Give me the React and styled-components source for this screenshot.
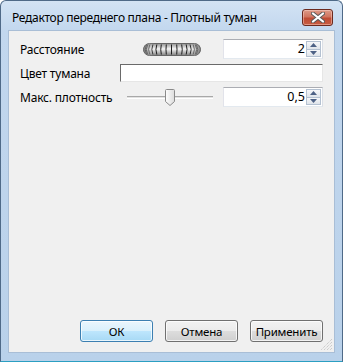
import React from "react";
import styled, { createGlobalStyle } from "styled-components";

const Global = createGlobalStyle`
  html, body { margin: 0; padding: 0; background: #ffffff; }
  body { font-family: "Noto Sans", "Open Sans", sans-serif; font-size: 12px; color: #000; }
  * { box-sizing: border-box; }
`;

const Window = styled.div`
  width: 343px;
  height: 362px;
  display: flex;
  flex-direction: column;
  border: 1px solid #4f6a88;
  border-bottom-color: #2b9fc2;
  border-radius: 6px 6px 0 0;
  background: linear-gradient(#d3e3f4 0px, #c2d7ee 30px, #b9d1ea 100%);
  overflow: hidden;
`;

const TitleBar = styled.div`
  height: 29px;
  flex: none;
  display: flex;
  align-items: center;
  padding: 4px 9px 0 11px;
`;

const Title = styled.div`
  flex: 1;
  font-size: 12px;
  color: #000;
  white-space: nowrap;
  letter-spacing: -0.3px;
`;

const CloseButton = styled.div`
  width: 31px;
  height: 17px;
  border: 1px solid #6b2a1f;
  border-radius: 3px;
  background: linear-gradient(#dd9a88 0%, #d07560 45%, #bf4c35 55%, #c75d42 100%);
  box-shadow: inset 0 0 0 1px rgba(255, 220, 210, 0.45);
  display: flex;
  align-items: center;
  justify-content: center;
`;

const Frame = styled.div`
  flex: 1;
  display: flex;
  padding: 0 7px 8px 7px;
`;

const Client = styled.div`
  flex: 1;
  position: relative;
  display: flex;
  flex-direction: column;
  background: #f0f0f0;
  border: 1px solid #a9bed6;
  padding: 8px 11px 10px 11px;
`;

const Form = styled.div`
  display: grid;
  grid-template-columns: 100px 103px 100px;
  row-gap: 5px;
  align-items: center;
`;

const Label = styled.div`
  font-size: 12px;
  letter-spacing: -0.2px;
  white-space: nowrap;
`;

const Middle = styled.div`
  display: flex;
  align-items: center;
  justify-content: ${(p) => p.$justify || "center"};
  grid-column: ${(p) => p.$span || "auto"};
`;

const SpinBox = styled.div`
  height: 20px;
  display: flex;
  align-items: stretch;
  background: #fff;
  border: 1px solid #abadb3;
  border-left-color: #e2e3ea;
  border-right-color: #dbdfe6;
  border-bottom-color: #e3e9ef;
  padding: 1px;
`;

const SpinValue = styled.div`
  flex: 1;
  text-align: right;
  font-size: 12.5px;
  line-height: 16px;
  padding-right: 1px;
`;

const SpinButtons = styled.div`
  width: 15px;
  display: flex;
  flex-direction: column;
`;

const SpinHalf = styled.div`
  flex: 1;
  display: flex;
  align-items: center;
  justify-content: center;
  border: 1px solid #b4c1d1;
  border-top-width: ${(p) => (p.$down ? "0" : "1px")};
  background: linear-gradient(#f6f7f9, #dfe4ea);
`;

const ColorField = styled.div`
  height: 18px;
  width: 203px;
  background: #fff;
  border-top: 1px solid #6a6a6a;
  border-left: 1px solid #6a6a6a;
  border-right: 1px solid #e6e6e6;
  border-bottom: 1px solid #e6e6e6;
`;

const Slider = styled.div`
  position: relative;
  width: 86px;
  height: 18px;
  margin-left: 7px;
  display: flex;
  align-items: center;
`;

const Track = styled.div`
  width: 100%;
  height: 3px;
  border-top: 1px solid #a8a8a8;
  border-bottom: 1px solid #ffffff;
  background: #e2e2e2;
`;

const Thumb = styled.svg`
  position: absolute;
  left: 38px;
  top: 1px;
`;

const Spacer = styled.div`
  flex: 1;
`;

const ButtonRow = styled.div`
  display: flex;
  justify-content: flex-end;
  gap: 12px;
`;

const Button = styled.div`
  width: 73px;
  height: 22px;
  border: 1px solid ${(p) => (p.$default ? "#3c7fb1" : "#707070")};
  border-radius: 3px;
  background: ${(p) =>
    p.$default
      ? "linear-gradient(#eaf6fd 0%, #d9f0fc 50%, #bee6fd 50%, #a7d9f5 100%)"
      : "linear-gradient(#f2f2f2 0%, #ebebeb 50%, #dddddd 50%, #cfcfcf 100%)"};
  box-shadow: inset 0 0 0 1px rgba(255, 255, 255, 0.75);
  display: flex;
  align-items: center;
  justify-content: center;
  font-size: 11.5px;
  letter-spacing: -0.2px;
`;

const Grip = styled.svg`
  position: absolute;
  right: 1px;
  bottom: 1px;
`;

function Knob() {
  const cx = 28.5;
  const r = 25;
  const lines = [];
  const n = 15;
  for (let i = 0; i < n; i++) {
    const theta = -Math.PI / 2 + ((i + 0.5) * Math.PI) / n;
    const x = cx + r * Math.sin(theta);
    const bend = 3 * Math.sin(theta);
    lines.push(
      <path
        key={i}
        d={`M${x.toFixed(2)} 1.5 Q${(x + bend).toFixed(2)} 6.5 ${x.toFixed(2)} 11.5`}
        stroke={Math.abs(Math.sin(theta)) > 0.8 ? "#444" : "#1e1e1e"}
        strokeWidth="1"
        fill="none"
      />
    );
  }
  return (
    <svg width="58" height="13" viewBox="0 0 58 13">
      <defs>
        <linearGradient id="kg" x1="0" y1="0" x2="0" y2="1">
          <stop offset="0" stopColor="#8e8e8e" />
          <stop offset="0.45" stopColor="#f6f6f6" />
          <stop offset="1" stopColor="#7c7c7c" />
        </linearGradient>
        <linearGradient id="kh" x1="0" y1="0" x2="1" y2="0">
          <stop offset="0" stopColor="#555" stopOpacity="0.75" />
          <stop offset="0.2" stopColor="#fff" stopOpacity="0" />
          <stop offset="0.8" stopColor="#fff" stopOpacity="0" />
          <stop offset="1" stopColor="#555" stopOpacity="0.75" />
        </linearGradient>
      </defs>
      <rect x="0.5" y="0.5" width="57" height="12" rx="6" fill="url(#kg)" stroke="#666" />
      {lines}
      <rect x="0.5" y="0.5" width="57" height="12" rx="6" fill="url(#kh)" />
    </svg>
  );
}

function Arrow({ down }) {
  return (
    <svg width="7" height="4" viewBox="0 0 7 4">
      <path d={down ? "M0 0 L7 0 L3.5 4 Z" : "M0 4 L7 4 L3.5 0 Z"} fill="#4d6185" />
    </svg>
  );
}

function Spin({ value }) {
  return (
    <SpinBox>
      <SpinValue>{value}</SpinValue>
      <SpinButtons>
        <SpinHalf>
          <Arrow />
        </SpinHalf>
        <SpinHalf $down>
          <Arrow down />
        </SpinHalf>
      </SpinButtons>
    </SpinBox>
  );
}

export default function App() {
  return (
    <>
      <Global />
      <Window>
        <TitleBar>
          <Title>Редактор переднего плана - Плотный туман</Title>
          <CloseButton>
            <svg width="14" height="11" viewBox="0 0 14 11">
              <path
                d="M2 1.5 L12 9.5 M12 1.5 L2 9.5"
                stroke="#5a5a5a"
                strokeWidth="4"
                strokeLinecap="round"
              />
              <path
                d="M2 1.5 L12 9.5 M12 1.5 L2 9.5"
                stroke="#ffffff"
                strokeWidth="2.2"
                strokeLinecap="round"
              />
            </svg>
          </CloseButton>
        </TitleBar>
        <Frame>
          <Client>
            <Form>
              <Label>Расстояние</Label>
              <Middle>
                <Knob />
              </Middle>
              <Spin value="2" />
              <Label>Цвет тумана</Label>
              <Middle $span="2 / 4" $justify="flex-start">
                <ColorField />
              </Middle>
              <Label>Макс. плотность</Label>
              <Middle $justify="flex-start">
                <Slider>
                  <Track />
                  <Thumb width="10" height="17" viewBox="0 0 10 17">
                    <defs>
                      <linearGradient id="tg" x1="0" y1="0" x2="1" y2="0">
                        <stop offset="0" stopColor="#fdfdfd" />
                        <stop offset="1" stopColor="#dcdcdc" />
                      </linearGradient>
                    </defs>
                    <path
                      d="M1.5 0.5 H8.5 Q9.5 0.5 9.5 1.5 V12.5 L5 16.5 L0.5 12.5 V1.5 Q0.5 0.5 1.5 0.5 Z"
                      fill="url(#tg)"
                      stroke="#8a8a8a"
                    />
                  </Thumb>
                </Slider>
              </Middle>
              <Spin value="0,5" />
            </Form>
            <Spacer />
            <ButtonRow>
              <Button $default>ОК</Button>
              <Button>Отмена</Button>
              <Button>Применить</Button>
            </ButtonRow>
            <Grip width="12" height="12" viewBox="0 0 12 12">
              <path d="M11 3 L3 11 M11 6 L6 11 M11 9 L9 11 M11 0 L0 11" stroke="#bcbcbc" strokeDasharray="1 1" />
            </Grip>
          </Client>
        </Frame>
      </Window>
    </>
  );
}
